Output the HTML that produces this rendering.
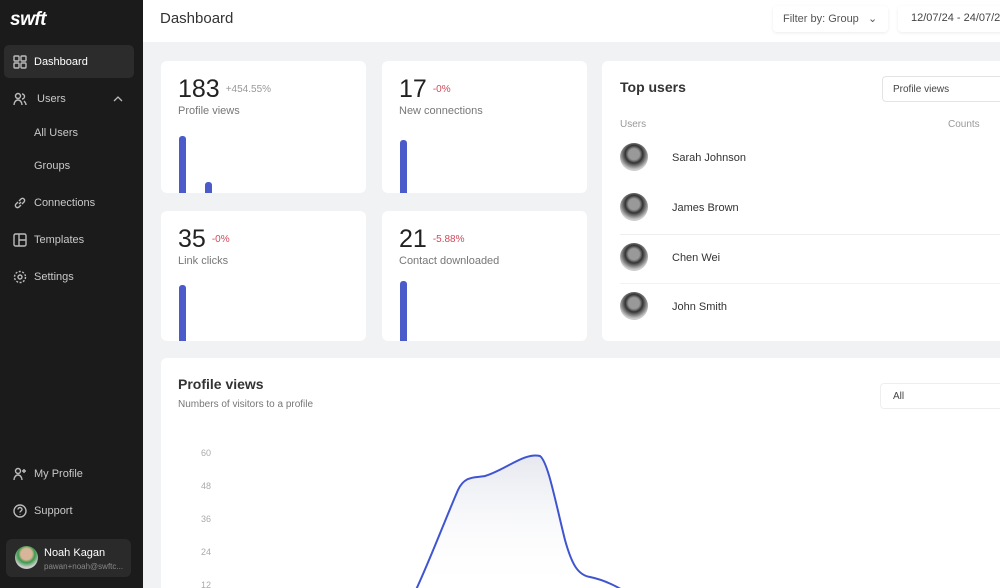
<!DOCTYPE html>
<html style="overflow:hidden;height:588px"><head><style>
*{box-sizing:border-box;margin:0;padding:0}
body{width:1000px;height:588px;overflow:hidden;font-family:"Liberation Sans",sans-serif;background:#f1f2f4;position:relative}
.sb{position:absolute;left:0;top:0;width:143px;height:588px;background:#1b1b1b;color:#c9c9c9;font-size:11px}
.logo{position:absolute;left:10px;top:9px;color:#fff;font-size:19px;font-weight:bold;font-style:italic;letter-spacing:-0.5px}
.it{position:absolute;left:13px;display:flex;align-items:center;gap:7px}
.it svg{width:14px;height:14px;stroke:#bbb;fill:none;stroke-width:1.4}
.act{position:absolute;left:4px;top:45px;width:130px;height:33px;background:#2c2c2c;border-radius:5px}
.hd{position:absolute;left:143px;top:0;width:857px;height:42px;background:#fff}
.card{position:absolute;background:#fff;border-radius:6px;overflow:hidden}
.num{position:absolute;left:17px;top:14px;font-size:25px;color:#222}
.pct{font-size:10px;margin-left:6px;vertical-align:5px}
.lbl{position:absolute;left:17px;top:44px;font-size:11px;color:#777}
.bar{position:absolute;width:7px;background:#4b5bc9;border-radius:3px 3px 0 0;bottom:0}
.av{width:28px;height:28px;border-radius:50%;background:radial-gradient(circle at 50% 40%,#999 0 25%,#333 40%,#ccc 70%);position:absolute;left:18px}
.nm{position:absolute;left:70px;font-size:11px;color:#333}
.yl{position:absolute;left:40px;font-size:9px;color:#aaa}
</style></head><body>
<div class="sb">
<div class="logo">swft</div>
<div class="act"></div>
<div class="it" style="top:55px;color:#fff"><svg viewBox="0 0 14 14"><rect x="1" y="1" width="5" height="5" rx="1"/><rect x="8" y="1" width="5" height="5" rx="1"/><rect x="1" y="8" width="5" height="5" rx="1"/><rect x="8" y="8" width="5" height="5" rx="1"/></svg>Dashboard</div>
<div class="it" style="top:92px"><svg viewBox="0 0 14 14"><circle cx="5" cy="4" r="2.5"/><path d="M1 13c0-3 2-5 4-5s4 2 4 5M9 2a2.5 2.5 0 010 5M11 9c1 1 2 2 2 4"/></svg>&nbsp;Users</div>
<svg style="position:absolute;left:113px;top:96px" width="10" height="6" viewBox="0 0 10 6" fill="none" stroke="#bbb" stroke-width="1.3"><path d="M1 5l4-4 4 4"/></svg>
<div class="it" style="top:127px;left:34px">All Users</div>
<div class="it" style="top:160px;left:34px">Groups</div>
<div class="it" style="top:196px"><svg viewBox="0 0 14 14"><path d="M6 8l2-2M5 6L3 8a2 2 0 003 3l2-2M9 8l2-2a2 2 0 00-3-3L6 5"/></svg>Connections</div>
<div class="it" style="top:233px"><svg viewBox="0 0 14 14"><rect x="1" y="1" width="12" height="12" rx="1.5"/><path d="M6 1v12M6 7h7"/></svg>Templates</div>
<div class="it" style="top:270px"><svg viewBox="0 0 14 14"><circle cx="7" cy="7" r="2"/><circle cx="7" cy="7" r="5.5" stroke-dasharray="2 1.5"/></svg>Settings</div>
<div class="it" style="top:467px"><svg viewBox="0 0 14 14"><circle cx="5" cy="4" r="2.5"/><path d="M1 13c0-3 2-5 4-5s4 2 4 5M11 2v4M9 4h4"/></svg>My Profile</div>
<div class="it" style="top:504px"><svg viewBox="0 0 14 14"><circle cx="7" cy="7" r="6"/><path d="M5 5.5a2 2 0 114 0c0 1.5-2 1.5-2 3M7 10.5v.5"/></svg>Support</div>
<div style="position:absolute;left:6px;top:539px;width:125px;height:38px;background:#2a2a2a;border-radius:6px">
<div style="position:absolute;left:9px;top:7px;width:23px;height:23px;border-radius:50%;background:radial-gradient(circle at 50% 35%,#d9b59a 0 30%,#3a9a4a 45%,#ccc 70%)"></div>
<div style="position:absolute;left:38px;top:8px;color:#fff;font-size:11px">Noah Kagan</div>
<div style="position:absolute;left:38px;top:23px;color:#888;font-size:8px">pawan+noah@swftc...</div>
</div>
</div>
<div class="hd">
<div style="position:absolute;left:17px;top:10px;font-size:15px;color:#333">Dashboard</div>
<div style="position:absolute;left:630px;top:6px;width:115px;height:26px;border-radius:4px;box-shadow:0 1px 3px rgba(0,0,0,.08);font-size:11px;color:#555;padding:6px 10px">Filter by: Group &nbsp;&nbsp;⌄</div>
<div style="position:absolute;left:755px;top:6px;width:110px;height:26px;border-radius:4px;box-shadow:0 1px 3px rgba(0,0,0,.08);font-size:11px;color:#444;padding:6px 13px;white-space:nowrap">12/07/24 - 24/07/24</div>
</div>

<div class="card" style="left:161px;top:61px;width:205px;height:132px"><div class="num">183<span class="pct" style="color:#999">+454.55%</span></div><div class="lbl">Profile views</div><div class="bar" style="left:18px;height:57px"></div><div class="bar" style="left:44px;height:11px"></div></div>
<div class="card" style="left:382px;top:61px;width:205px;height:132px"><div class="num">17<span class="pct" style="color:#d04a5a">-0%</span></div><div class="lbl">New connections</div><div class="bar" style="left:18px;height:53px"></div></div>
<div class="card" style="left:161px;top:211px;width:205px;height:130px"><div class="num">35<span class="pct" style="color:#d04a5a">-0%</span></div><div class="lbl">Link clicks</div><div class="bar" style="left:18px;height:56px"></div></div>
<div class="card" style="left:382px;top:211px;width:205px;height:130px"><div class="num">21<span class="pct" style="color:#d04a5a">-5.88%</span></div><div class="lbl">Contact downloaded</div><div class="bar" style="left:18px;height:60px"></div></div>

<div class="card" style="left:602px;top:61px;width:398px;height:280px;border-radius:6px 0 0 6px">
<div style="position:absolute;left:18px;top:18px;font-size:14px;font-weight:bold;color:#333">Top users</div>
<div style="position:absolute;left:280px;top:15px;width:130px;height:26px;border:1px solid #e4e4e4;border-radius:4px;font-size:10px;color:#444;padding:7px 10px">Profile views</div>
<div style="position:absolute;left:18px;top:58px;font-size:10px;color:#999">Users</div>
<div style="position:absolute;left:346px;top:58px;font-size:10px;color:#999">Counts</div>
<div class="av" style="top:82px"></div><div class="nm" style="top:91px">Sarah Johnson</div>
<div class="av" style="top:132px"></div><div class="nm" style="top:141px">James Brown</div>
<div style="position:absolute;left:18px;top:173px;width:390px;height:1px;background:#eee"></div>
<div class="av" style="top:182px"></div><div class="nm" style="top:191px">Chen Wei</div>
<div style="position:absolute;left:18px;top:222px;width:390px;height:1px;background:#f2f2f2"></div>
<div class="av" style="top:231px"></div><div class="nm" style="top:240px">John Smith</div>
</div>

<div class="card" style="left:161px;top:358px;width:839px;height:230px;border-radius:6px 0 0 0">
<div style="position:absolute;left:17px;top:18px;font-size:14px;font-weight:bold;color:#333">Profile views</div>
<div style="position:absolute;left:17px;top:41px;font-size:10px;color:#777">Numbers of visitors to a profile</div>
<div style="position:absolute;left:719px;top:25px;width:130px;height:26px;border:1px solid #eee;border-radius:4px;font-size:10px;color:#444;padding:7px 12px">All</div>
<div class="yl" style="top:90px">60</div><div class="yl" style="top:123px">48</div><div class="yl" style="top:156px">36</div><div class="yl" style="top:189px">24</div><div class="yl" style="top:222px">12</div>
</div>
<svg style="position:absolute;left:0;top:0" width="1000" height="588">
<defs><linearGradient id="g" x1="0" y1="0" x2="0" y2="1"><stop offset="0" stop-color="#e6e8ef"/><stop offset="1" stop-color="#fff" stop-opacity="0"/></linearGradient></defs>
<path d="M415 592 C430 560 445 520 458 490 C465 475 475 478 485 476 C505 470 525 452 540 456 C548 462 555 500 565 540 C572 565 578 575 590 577 C605 580 620 588 625 592 Z" fill="url(#g)"/>
<path d="M415 592 C430 560 445 520 458 490 C465 475 475 478 485 476 C505 470 525 452 540 456 C548 462 555 500 565 540 C572 565 578 575 590 577 C605 580 620 588 625 592" fill="none" stroke="#3f55d0" stroke-width="2"/>
</svg>
</body></html>
